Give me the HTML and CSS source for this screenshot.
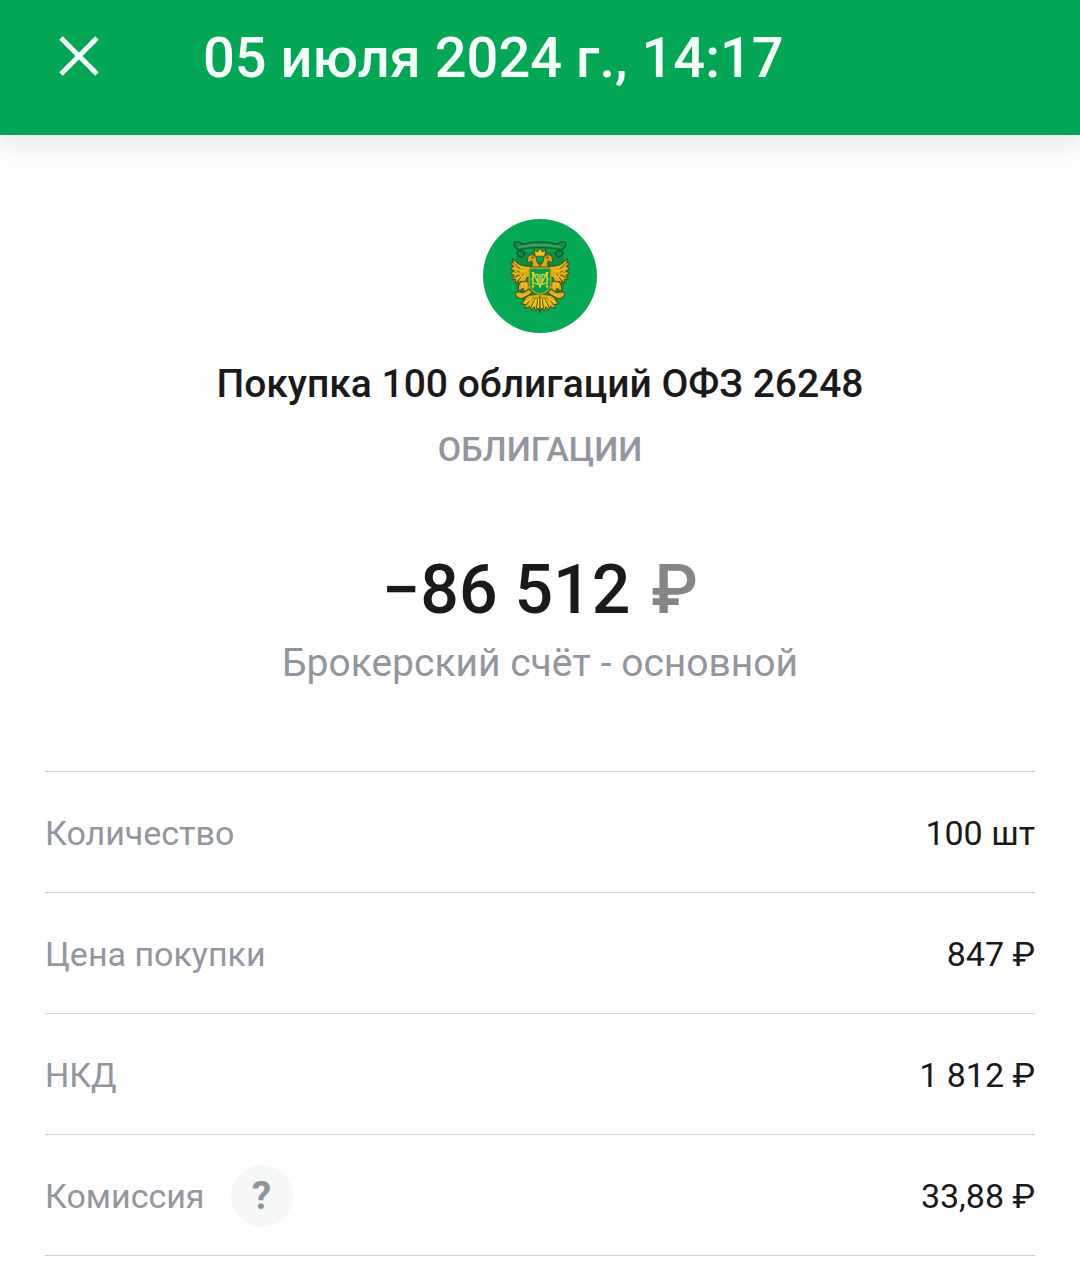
FILE: index.html
```html
<!DOCTYPE html>
<html lang="ru">
<head>
    <meta charset="UTF-8">
    <meta name="viewport" content="width=device-width, initial-scale=1.0">
    <title>Покупка ОФЗ 26248</title>
    <link rel="stylesheet" href="styles.css">
</head>
<body>
    <header class="header">
        <button type="button" class="close-btn" aria-label="Закрыть">
            <svg viewBox="0 0 40 40" width="40" height="40" fill="none" stroke="currentColor" stroke-width="5">
                <path d="M2 2L38 38M38 2L2 38"/>
            </svg>
        </button>
        <h1>05 июля 2024 г., 14:17</h1>
    </header>

    <main class="content">
        <section class="summary">
            <svg class="logo" viewBox="39 41 340 340" aria-hidden="true">
                <defs>
                    <g id="wing" stroke="#4d5517" stroke-width="3" stroke-linejoin="round">
                        <path d="M126 158Q136 166 143 175Q160 184 181 181L182 214Q168 210 168 226L161 236L152 226L146 236L143 226L135 232L136 221L126 222L131 208L122 205L129 195L121 189L129 182L122 173L129 171Z" fill="#dca719"/>
                        <path d="M128 168L150 190M126 182L150 200M127 196L150 208M132 216L152 205M142 228L160 205" fill="none"/>
                        <path d="M132 169L152 186L176 187M129 186L150 196L172 195M130 201L152 206M137 220L156 210M150 224L164 206" fill="none" stroke="#f3c41e" stroke-width="4"/>
                        <path d="M152 228Q140 242 147 256L158 248L164 260L179 250L172 226Z" fill="#d9a81e"/>
                        <path d="M158 232L154 246M166 232L167 250" fill="none" stroke="#f3c41e" stroke-width="4"/>
                        <path d="M134 262Q140 280 156 278Q172 272 186 260L174 250Q160 266 148 258Z" fill="#e0b51c"/>
                        <path d="M186 268Q168 268 160 286L152 294L166 296L164 308L178 303L183 313L192 303L195 315L204 306L209 320V264Z" fill="#dfb51b"/>
                        <path d="M190 275Q175 282 169 298M198 275L181 306M204 275L198 308" fill="none"/>
                        <path d="M186 276L166 291M197 280L188 302M205 278L204 306" fill="none" stroke="#f7d328" stroke-width="4"/>
                        <path d="M172 166Q170 148 186 147Q200 150 199 165Q202 174 209 178V184H180Q192 176 183 166L173 172Z" fill="#dba81d"/>
                        <circle cx="187" cy="156" r="2"/>
                    </g>
                </defs>
                <circle cx="209" cy="211" r="170" fill="#04a855"/>
                <path d="M142 138L276 138L285 190L276 270L240 305L209 315L178 305L142 270L133 190Z" fill="#0b8d42"/>
                <!-- ribbon -->
                <path d="M133 111Q146 106 158 116Q208 102 260 116Q272 106 285 111Q290 124 273 133Q208 120 145 133Q128 124 133 111Z" fill="#0e8f4b" stroke="#075c2c" stroke-width="4"/>
                <path d="M147 125Q208 112 272 125" fill="none" stroke="#76a964" stroke-width="5" stroke-dasharray="4 2"/>
                <path d="M140 138q14-5 24 3l-8 14q-16-1-16-17M278 138q-14-5-24 3l8 14q16-1 16-17" fill="#12884b" stroke="#075c2c" stroke-width="4"/>
                <!-- eagle, right half mirrors the left -->
                <use href="#wing"/>
                <use href="#wing" transform="translate(418 0) scale(-1 1)"/>
                <!-- crown -->
                <path d="M195 152L191 132L202 139L209 126L216 139L227 132L223 152Z" fill="#f0c51d" stroke="#4d5517" stroke-width="3"/>
                <path d="M199 153H219V164Q209 175 199 164Z" fill="#159b45"/>
                <!-- shield -->
                <path d="M177 188H241V240Q240 254 209 266Q178 254 177 240Z" fill="#0b9a48" stroke="#a9a826" stroke-width="4"/>
                <path d="M188 243V200L209 244L230 200V243M209 205V246M184 201H192M226 201H234M184 243H192M226 243H234M203 207C180 202 180 235 203 235ZM215 207C238 202 238 235 215 235Z" fill="none" stroke="#d7d23a" stroke-width="4"/>
            </svg>
            <h2>Покупка 100 облигаций ОФЗ 26248</h2>
            <p class="category">ОБЛИГАЦИИ</p>
            <p class="amount">−86 512 <span class="currency">₽</span></p>
            <p class="account">Брокерский счёт - основной</p>
        </section>

        <dl class="details">
            <div class="row">
                <dt>Количество</dt>
                <dd>100 шт</dd>
            </div>
            <div class="row">
                <dt>Цена покупки</dt>
                <dd>847 ₽</dd>
            </div>
            <div class="row">
                <dt>НКД</dt>
                <dd>1 812 ₽</dd>
            </div>
            <div class="row">
                <dt>Комиссия <button type="button" class="help-btn" aria-label="О комиссии">?</button></dt>
                <dd>33,88 ₽</dd>
            </div>
        </dl>
    </main>
</body>
</html>
```
FILE: styles.css
```css
* {
    margin: 0;
    padding: 0;
    box-sizing: border-box;
}

body {
    font-family: Roboto, "Noto Sans", sans-serif;
    background: #fefefe;
    color: #1a1a1a;
}

button {
    border: none;
    font-family: inherit;
    cursor: pointer;
}

.header {
    display: flex;
    align-items: flex-start;
    gap: 104px;
    padding: 36px 59px 55px;
    background: #02a654;
    color: #f4fffa;
    box-shadow: 0 0 32px 4px rgba(0, 0, 0, 0.12);
}

.header h1 {
    font-size: 56px;
    font-weight: 500;
    line-height: 44px;
}

.close-btn {
    width: 40px;
    height: 40px;
    background: none;
    color: inherit;
}

.close-btn svg {
    display: block;
}

.content {
    padding: 84px 45px 0;
}

.summary {
    display: flex;
    flex-direction: column;
    align-items: center;
    text-align: center;
}

.logo {
    width: 114px;
    height: 114px;
}

.summary h2 {
    margin-top: 27px;
    font-size: 39px;
    font-weight: 500;
    line-height: 48px;
}

.category {
    margin-top: 21px;
    font-size: 34px;
    font-weight: 500;
    line-height: 40px;
    color: #92969f;
}

.amount {
    margin-top: 81px;
    font-size: 68px;
    font-weight: 500;
    line-height: 80px;
}

.currency {
    margin-left: 4px;
    color: #858585;
}

.account {
    margin-top: 9px;
    font-size: 39px;
    line-height: 48px;
    color: #92969f;
}

.details {
    margin-top: 84px;
    border-top: 1px solid #cfd0d2;
}

.row {
    display: flex;
    align-items: center;
    justify-content: space-between;
    min-height: 121px;
    padding-top: 2px;
    border-bottom: 1px solid #cfd0d2;
    font-size: 34px;
}

.row dt {
    display: flex;
    align-items: center;
    gap: 26px;
    color: #92969f;
}

.help-btn {
    width: 62px;
    height: 62px;
    border-radius: 50%;
    background: #f6f8f8;
    color: #8f939e;
    font-size: 39px;
    font-weight: 700;
}
```
